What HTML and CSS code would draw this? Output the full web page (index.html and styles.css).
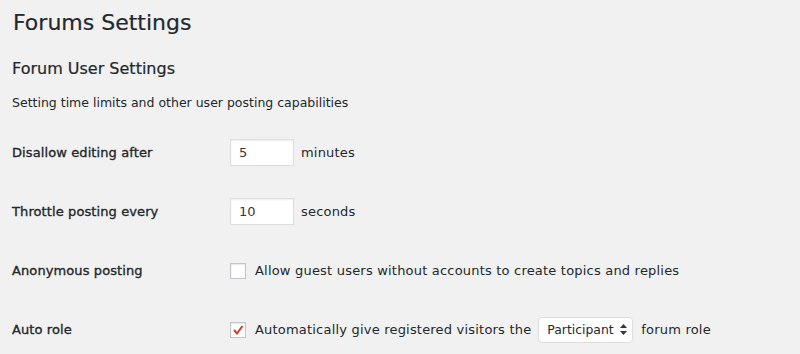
FILE: index.html
```html
<!DOCTYPE html>
<html lang="en">
<head>
    <meta charset="UTF-8">
    <title>Forums Settings</title>
    <link rel="stylesheet" href="styles.css">
</head>
<body>
    <div class="wrap">
        <h1>Forums Settings</h1>
        <h2>Forum User Settings</h2>
        <p class="section-desc">Setting time limits and other user posting capabilities</p>

        <!-- settings rows -->
        <div class="form-table">
            <div class="row">
                <div class="label">Disallow editing after</div>
                <div class="field">
                    <input type="text" class="small-text" value="5">
                    <span>minutes</span>
                </div>
            </div>
            <div class="row">
                <div class="label">Throttle posting every</div>
                <div class="field">
                    <input type="text" class="small-text" value="10">
                    <span>seconds</span>
                </div>
            </div>
            <div class="row">
                <div class="label">Anonymous posting</div>
                <div class="field">
                    <span class="checkbox"></span>
                    <span>Allow guest users without accounts to create topics and replies</span>
                </div>
            </div>
            <div class="row">
                <div class="label">Auto role</div>
                <div class="field">
                    <span class="checkbox checked">
                        <svg width="12" height="12" viewBox="0 0 12 12"><polyline points="2,6 5,9.5 10.5,2" fill="none" stroke="#d9342b" stroke-width="2"/></svg>
                    </span>
                    <span>Automatically give registered visitors the</span>
                    <span class="select">Participant
                        <svg width="7" height="11" viewBox="0 0 7 11"><polygon points="3.5,0 7,4 0,4" fill="#32373c"/><polygon points="0,7 7,7 3.5,11" fill="#32373c"/></svg>
                    </span>
                    <span>forum role</span>
                </div>
            </div>
        </div>
    </div>
</body>
</html>
```

FILE: styles.css
```css
body {
    margin: 0;
    padding: 0;
    background-color: #f1f1f1;
    color: #23282d;
    font-family: 'DejaVu Sans', sans-serif;
    font-size: 13px;
}
.wrap {
    padding: 0 12px;
}
h1 {
    font-size: 22px;
    font-weight: 400;
    line-height: 30px;
    margin: 8px 0 0 1px;
    -webkit-text-stroke: 0.2px #23282d;
}
h2 {
    font-size: 16px;
    font-weight: 400;
    line-height: 24px;
    margin: 19px 0 0 0;
    -webkit-text-stroke: 0.2px #23282d;
}
.section-desc {
    font-size: 12.5px;
    line-height: 18px;
    margin: 13px 0 0 0;
}
.form-table {
    margin-top: 11px;
}
.row {
    display: flex;
    align-items: center;
    height: 59px;
}
.label {
    width: 218px;
    font-size: 13px;
    letter-spacing: 0.1px;
    -webkit-text-stroke: 0.35px #23282d;
}
.field {
    display: flex;
    align-items: center;
    gap: 7px;
    letter-spacing: 0.2px;
}
.small-text {
    width: 64px;
    height: 27px;
    box-sizing: border-box;
    border: 1px solid #ddd;
    box-shadow: inset 0 1px 2px rgba(0, 0, 0, 0.07);
    background: #fff;
    padding: 0 8px;
    font-family: 'DejaVu Sans', sans-serif;
    font-size: 13px;
    color: #32373c;
    margin: 0;
}
.checkbox {
    width: 16px;
    height: 16px;
    box-sizing: border-box;
    border: 1px solid #c3c6c9;
    background: #fff;
    box-shadow: inset 0 1px 2px rgba(0, 0, 0, 0.1);
    display: flex;
    align-items: center;
    justify-content: center;
    margin-right: 2px;
}
.select {
    display: flex;
    align-items: center;
    justify-content: space-between;
    width: 95px;
    height: 26px;
    box-sizing: border-box;
    padding: 0 5px 0 8px;
    background: #fff;
    border: 1px solid #ddd;
    border-radius: 4px;
    font-size: 12.4px;
    letter-spacing: 0;
    margin: 0 1px 0 0;
}
```
